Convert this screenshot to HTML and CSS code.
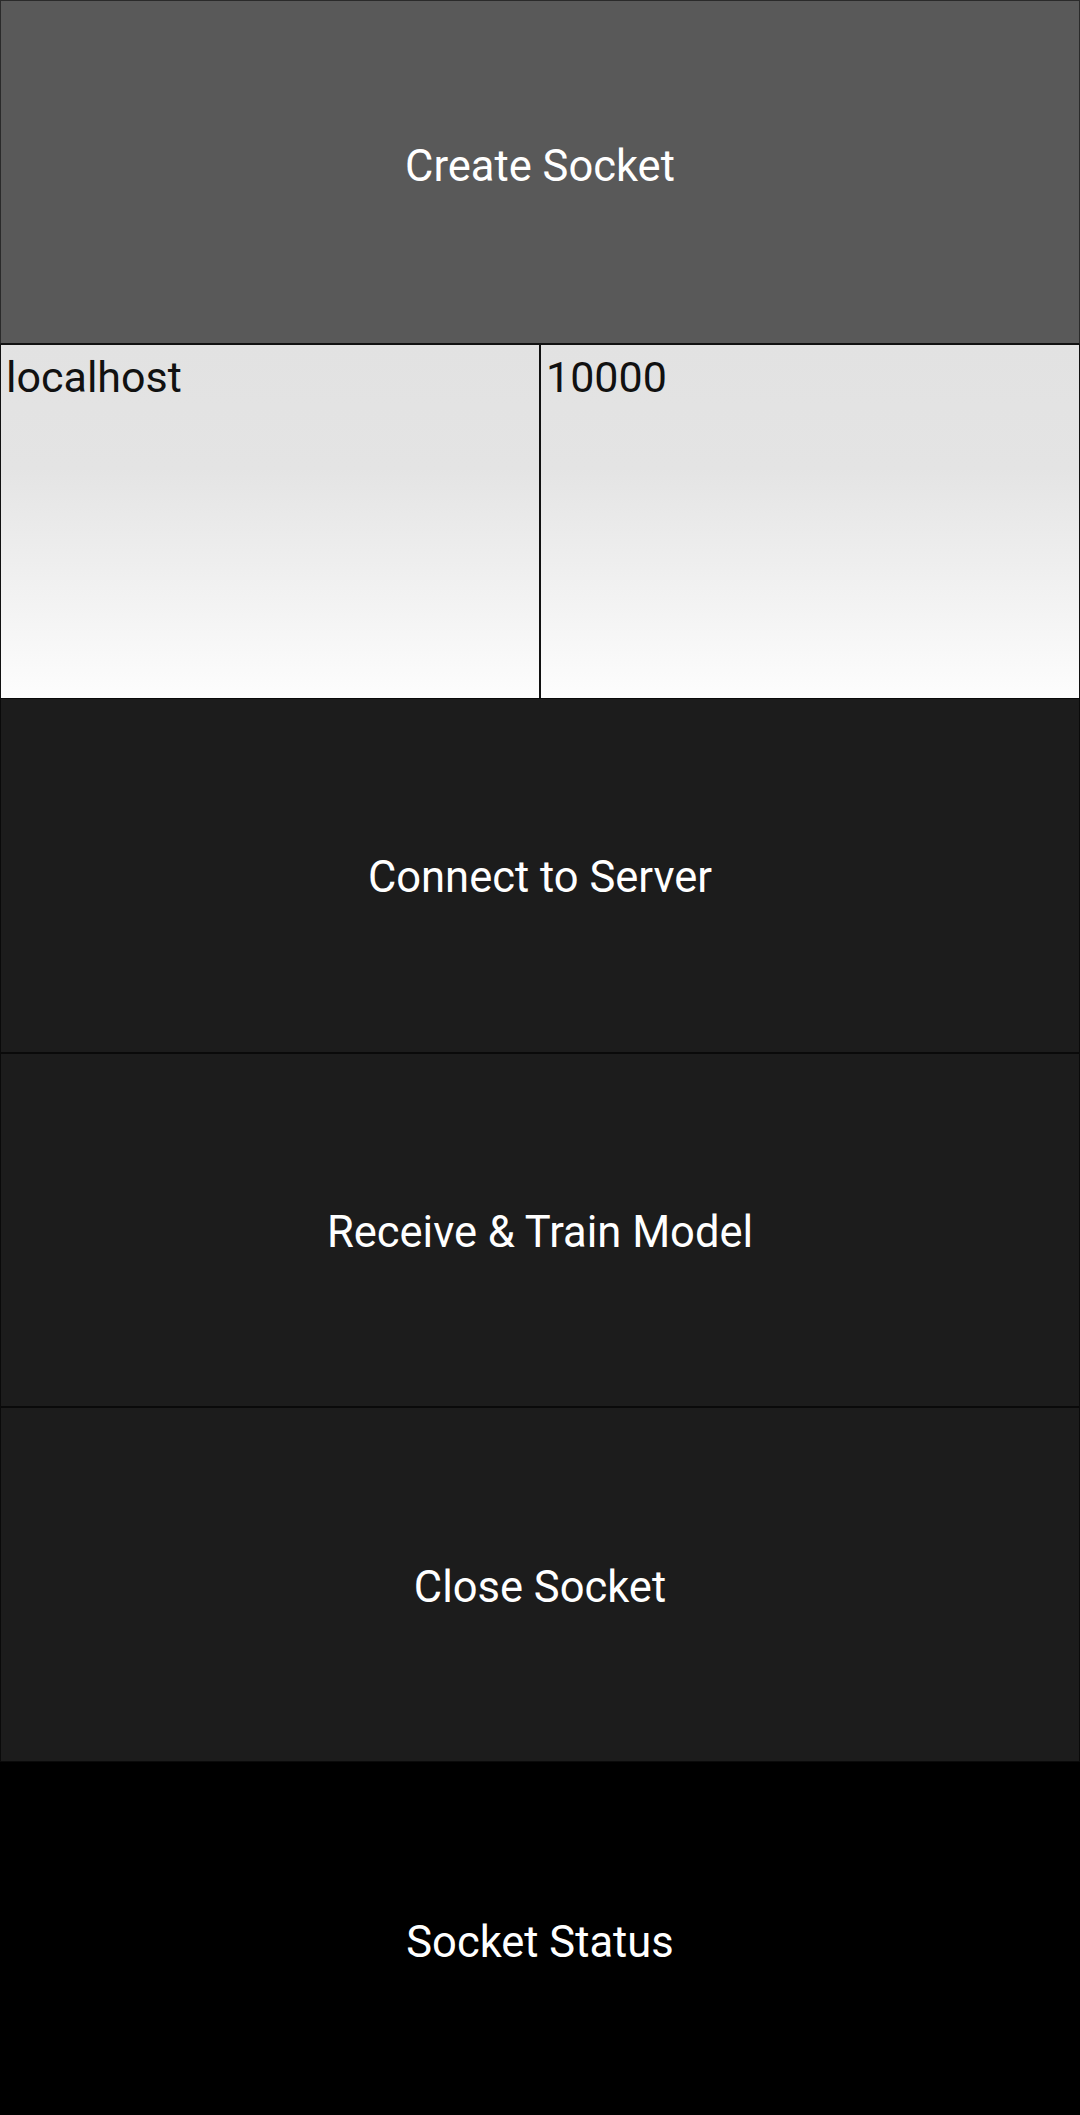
FILE: index.html
```html
<!DOCTYPE html>
<html lang="en">
<head>
<meta charset="utf-8">
<title>Socket Client</title>
<link rel="stylesheet" href="styles.css">
</head>
<body>
<main class="app">
  <button class="btn btn-create">Create Socket</button>
  <div class="fields">
    <div class="field">localhost</div>
    <div class="field">10000</div>
  </div>
  <button class="btn btn-dark">Connect to Server</button>
  <button class="btn btn-dark">Receive &amp; Train Model</button>
  <button class="btn btn-dark btn-close">Close Socket</button>
  <div class="status">Socket Status</div>
</main>
</body>
</html>
```

FILE: styles.css
```css
html, body {
  margin: 0;
  padding: 0;
  background: #000;
}

.app {
  width: 1080px;
  height: 2115px;
  display: grid;
  grid-template-rows: 344px 354px 355px 354px 355px 353px;
  font-family: Roboto, "Noto Sans", sans-serif;
}

.btn {
  margin: 0;
  padding: 0;
  font-family: inherit;
  font-size: 43.5px;
  font-weight: 400;
  color: #fff;
  display: flex;
  align-items: center;
  justify-content: center;
  border: 1px solid #0c0c0c;
  box-sizing: border-box;
  width: 100%;
  height: 100%;
}

.btn-create {
  background: #595959;
  border-color: #2a2a2a;
  border-bottom-color: #111;
  padding-bottom: 11px;
}

.btn-dark {
  background: #1c1c1c;
  border-color: #0a0a0a;
  padding-top: 4px;
}

.btn-close {
  padding-top: 6px;
}

.fields {
  display: grid;
  grid-template-columns: 1fr 1fr;
}

.field {
  box-sizing: border-box;
  border: 1px solid #111;
  border-bottom: none;
  padding: 7px 5px;
  font-size: 43px;
  color: #111;
  background: linear-gradient(#e2e2e2 0%, #e4e4e4 35%, #fdfdfd 100%);
}

.status {
  background: #000;
  color: #fff;
  font-size: 43.5px;
  display: flex;
  align-items: center;
  justify-content: center;
  padding-top: 8px;
}
```
